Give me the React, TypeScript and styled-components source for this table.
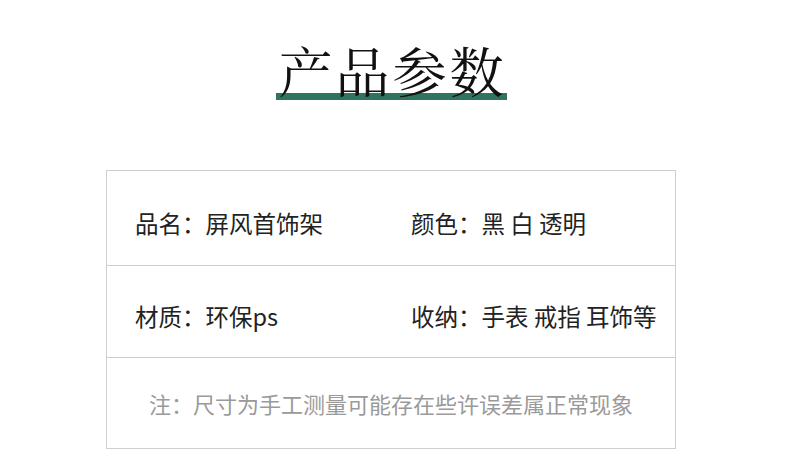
import React from 'react';
import styled, { createGlobalStyle } from 'styled-components';

const GlobalStyle = createGlobalStyle`
  html, body {
    margin: 0;
    padding: 0;
    background: #ffffff;
  }
  body {
    font-family: 'Noto Sans CJK SC', 'Noto Sans', sans-serif;
    color: #222222;
  }
`;

const Page = styled.div`
  width: 782px;
  height: 459px;
  display: flex;
  flex-direction: column;
  align-items: center;
`;

const Title = styled.h1`
  margin: 42px 0 0;
  padding: 0 0 2px 3px;
  height: 56px;
  font-family: 'Noto Serif CJK SC', 'Noto Sans CJK SC', serif;
  font-size: 54px;
  font-weight: 400;
  line-height: 56px;
  letter-spacing: 3px;
  color: #111111;
  background: linear-gradient(#2f7460, #2f7460) left bottom / 100% 7px no-repeat;
`;

const Table = styled.div`
  margin-top: 70px;
  width: 568px;
  border: 1px solid #cfcfcf;
  display: flex;
  flex-direction: column;
`;

const Row = styled.div<{ $h: number }>`
  height: ${(p) => p.$h}px;
  display: grid;
  grid-template-columns: 276px 1fr;
  align-items: center;
  padding: 9px 0 0 28px;
  box-sizing: border-box;
  & + & {
    border-top: 1px solid #cfcfcf;
  }
`;

const Cell = styled.div`
  font-size: 23.5px;
  line-height: 30px;
  color: #222222;
  white-space: nowrap;
`;

const Note = styled.div`
  height: 90px;
  border-top: 1px solid #cfcfcf;
  display: flex;
  align-items: center;
  justify-content: center;
  font-size: 22px;
  color: #9a9a9a;
  white-space: nowrap;
`;

const rows = [
  { h: 94, left: '品名：屏风首饰架', right: '颜色：黑 白 透明' },
  { h: 92, left: '材质：环保ps', right: '收纳：手表 戒指 耳饰等' },
];

const App = () => {
  return (
    <Page>
      <GlobalStyle />
      <Title>产品参数</Title>
      <Table>
        {rows.map((r) => (
          <Row key={r.left} $h={r.h}>
            <Cell>{r.left}</Cell>
            <Cell>{r.right}</Cell>
          </Row>
        ))}
        <Note>注：尺寸为手工测量可能存在些许误差属正常现象</Note>
      </Table>
    </Page>
  );
};

export default App;
